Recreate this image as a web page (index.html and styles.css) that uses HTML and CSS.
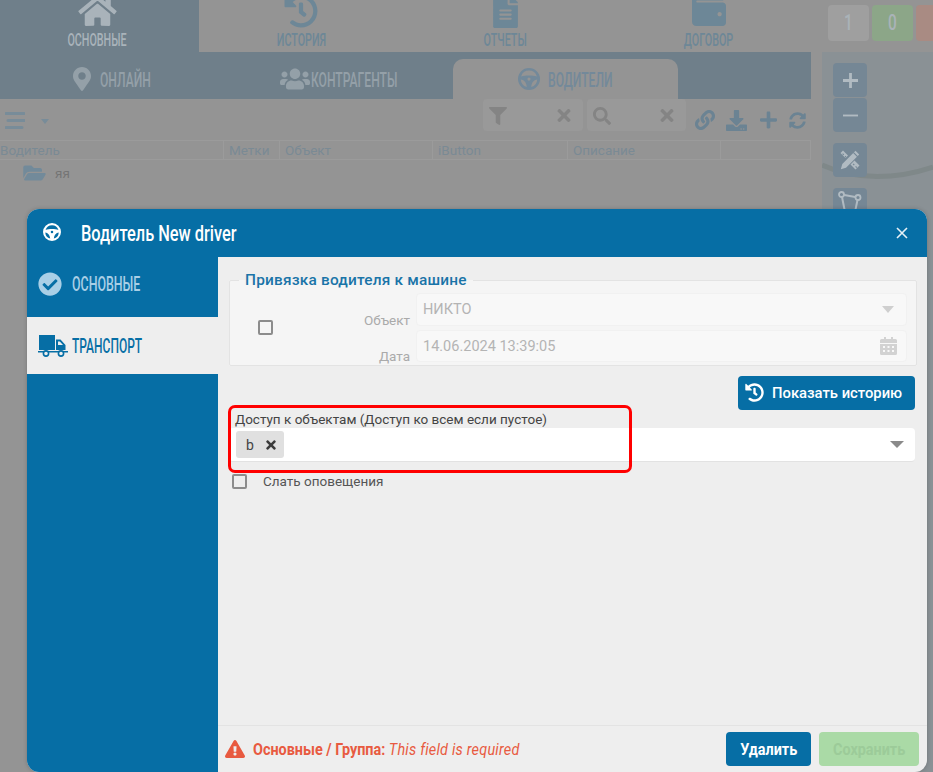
FILE: index.html
```html
<!DOCTYPE html>
<html lang="ru">
<head>
<meta charset="utf-8">
<title>Водитель New driver</title>
<link rel="stylesheet" href="styles.css">
</head>
<body>
<svg class="defs" width="0" height="0" aria-hidden="true">
  <symbol id="i-wheel" viewBox="0 0 24 24"><path fill="currentColor" fill-rule="evenodd" d="M12 0a12 12 0 1 0 0 24a12 12 0 1 0 0-24zM3.4 9.2A9 9 0 0 1 20.6 9.2C16 7.8 8 7.8 3.4 9.2zM3 12.6C6.4 12.8 9 15.6 9.6 20.7A9 9 0 0 1 3 12.6zM21 12.6C17.6 12.8 15 15.6 14.4 20.7A9 9 0 0 0 21 12.6zM12 10.4a1.7 1.7 0 1 0 0 3.4a1.7 1.7 0 1 0 0-3.4z"/></symbol>
  <symbol id="i-times" viewBox="0 0 352 512"><path fill="currentColor" d="M242.72 256l100.07-100.07c12.28-12.28 12.28-32.19 0-44.48l-22.24-22.24c-12.28-12.28-32.19-12.28-44.48 0L176 189.28 75.93 89.21c-12.28-12.28-32.19-12.28-44.48 0L9.21 111.45c-12.28 12.28-12.28 32.19 0 44.48L109.28 256 9.21 356.07c-12.28 12.28-12.28 32.19 0 44.48l22.24 22.24c12.28 12.28 32.2 12.28 44.48 0L176 322.72l100.07 100.07c12.28 12.28 32.2 12.28 44.48 0l22.24-22.24c12.28-12.28 12.28-32.19 0-44.48L242.72 256z"/></symbol>
  <symbol id="i-history" viewBox="0 0 512 512"><path fill="currentColor" d="M504 255.531c.253 136.64-111.18 248.372-247.82 248.468-59.015.042-113.223-20.53-155.822-54.911-11.077-8.94-11.905-25.541-1.839-35.607l11.267-11.267c8.609-8.609 22.353-9.551 31.891-1.984C173.062 425.135 212.781 440 256 440c101.705 0 184-82.311 184-184 0-101.705-82.311-184-184-184-48.814 0-93.149 18.969-126.068 49.932l50.754 50.754c10.08 10.08 2.941 27.314-11.313 27.314H24c-8.837 0-16-7.163-16-16V38.627c0-14.254 17.234-21.393 27.314-11.314l49.372 49.372C129.209 31.084 189.552 8 256 8c136.81 0 247.747 110.78 248 247.531zm-180.912 78.784l9.823-12.63c8.138-10.463 6.253-25.542-4.21-33.679L288 256.349V152c0-13.255-10.745-24-24-24h-16c-13.255 0-24 10.745-24 24v135.651l65.409 50.874c10.463 8.137 25.541 6.253 33.679-4.21z"/></symbol>
</svg>

<div class="app">
  <main class="main">
    <nav class="nav">
      <a class="nav-item nav-active">
        <svg class="ico-home" viewBox="0 0 576 512"><path fill="currentColor" d="M280.37 148.26L96 300.11V464a16 16 0 0 0 16 16l112.06-.29a16 16 0 0 0 15.92-16V368a16 16 0 0 1 16-16h64a16 16 0 0 1 16 16v95.64a16 16 0 0 0 16 16.05L464 480a16 16 0 0 0 16-16V300L295.67 148.26a12.19 12.19 0 0 0-15.3 0zM571.6 251.47L488 182.56V44.05a12 12 0 0 0-12-12h-56a12 12 0 0 0-12 12v72.61L318.47 43a48 48 0 0 0-61 0L4.34 251.47a12 12 0 0 0-1.6 16.9l25.5 31A12 12 0 0 0 45.15 301l235.22-193.74a12.19 12.19 0 0 1 15.3 0L530.9 301a12 12 0 0 0 16.9-1.6l25.5-31a12 12 0 0 0-1.7-16.93z"/></svg>
        <span class="cond nav-label">ОСНОВНЫЕ</span>
      </a>
      <a class="nav-item">
        <svg class="ico-hist"><use href="#i-history"/></svg>
        <span class="cond nav-label">ИСТОРИЯ</span>
      </a>
      <a class="nav-item">
        <svg class="ico-file" viewBox="0 0 384 512"><path fill="currentColor" d="M224 136V0H24C10.7 0 0 10.7 0 24v464c0 13.3 10.7 24 24 24h336c13.3 0 24-10.7 24-24V160H248c-13.2 0-24-10.8-24-24zm64 236c0 6.6-5.4 12-12 12H108c-6.6 0-12-5.4-12-12v-8c0-6.6 5.4-12 12-12h168c6.6 0 12 5.4 12 12v8zm0-64c0 6.6-5.4 12-12 12H108c-6.6 0-12-5.4-12-12v-8c0-6.6 5.4-12 12-12h168c6.6 0 12 5.4 12 12v8zm0-72v8c0 6.6-5.4 12-12 12H108c-6.6 0-12-5.4-12-12v-8c0-6.6 5.4-12 12-12h168c6.6 0 12 5.4 12 12zm96-114.1v6.1H256V0h6.1c6.4 0 12.5 2.5 17 7l97.9 98c4.5 4.5 7 10.6 7 16.9z"/></svg>
        <span class="cond nav-label">ОТЧЕТЫ</span>
      </a>
      <a class="nav-item">
        <svg class="ico-wallet" viewBox="0 0 512 512"><path fill="currentColor" d="M461.2 128H80c-8.84 0-16-7.16-16-16s7.16-16 16-16h384c8.84 0 16-7.16 16-16 0-26.51-21.49-48-48-48H64C28.65 32 0 60.65 0 96v320c0 35.35 28.65 64 64 64h397.2c28.02 0 50.8-21.53 50.8-48V176c0-26.47-22.78-48-50.8-48zM416 336c-17.67 0-32-14.33-32-32s14.33-32 32-32 32 14.33 32 32-14.33 32-32 32z"/></svg>
        <span class="cond nav-label">ДОГОВОР</span>
      </a>
    </nav>

    <div class="tabs">
      <a class="tab tab-online">
        <svg class="ico-pin" viewBox="0 0 384 512"><path fill="currentColor" d="M172.268 501.67C26.97 291.031 0 269.413 0 192 0 85.961 85.961 0 192 0s192 85.961 192 192c0 77.413-26.97 99.031-172.268 309.67-9.535 13.774-29.93 13.773-39.464 0zM192 272c44.183 0 80-35.817 80-80s-35.817-80-80-80-80 35.817-80 80 35.817 80 80 80z"/></svg>
        <span class="cond tab-label">ОНЛАЙН</span>
      </a>
      <a class="tab tab-partners">
        <svg class="ico-users" viewBox="0 0 640 512"><path fill="currentColor" d="M96 224c35.3 0 64-28.7 64-64s-28.7-64-64-64-64 28.7-64 64 28.7 64 64 64zm448 0c35.3 0 64-28.7 64-64s-28.7-64-64-64-64 28.7-64 64 28.7 64 64 64zm32 32h-64c-17.6 0-33.5 7.1-45.1 18.6 40.3 22.1 68.9 62 75.1 109.4h66c17.7 0 32-14.3 32-32v-32c0-35.3-28.7-64-64-64zm-256 0c61.9 0 112-50.1 112-112S381.9 32 320 32 208 82.1 208 144s50.1 112 112 112zm76.8 32h-8.3c-20.8 10-43.9 16-68.5 16s-47.6-6-68.5-16h-8.3C179.6 288 128 339.6 128 403.2V432c0 26.5 21.5 48 48 48h288c26.5 0 48-21.5 48-48v-28.8c0-63.6-51.6-115.2-115.2-115.2zm-223.7-13.4C161.5 263.1 145.6 256 128 256H64c-35.3 0-64 28.7-64 64v32c0 17.7 14.3 32 32 32h65.9c6.3-47.4 34.9-87.3 75.2-109.4z"/></svg>
        <span class="cond tab-label">КОНТРАГЕНТЫ</span>
      </a>
      <a class="tab tab-drivers">
        <svg class="ico-wheel-tab"><use href="#i-wheel"/></svg>
        <span class="cond tab-label">ВОДИТЕЛИ</span>
      </a>
    </div>

    <div class="toolbar">
      <svg class="ico-bars" viewBox="0 0 20 17"><path fill="currentColor" d="M1 0h18a1 1 0 0 1 0 3H1a1 1 0 0 1 0-3zM3 7h17a1 1 0 0 1 0 3H3a1 1 0 0 1 0-3zM1 14h16a1 1 0 0 1 0 3H1a1 1 0 0 1 0-3z"/></svg>
      <span class="caret-small"></span>
      <div class="tool-spacer"></div>
      <div class="tool-box tool-filter">
        <svg class="ico-filter" viewBox="0 0 512 512"><path fill="currentColor" d="M487.976 0H24.028C2.71 0-8.047 25.866 7.058 40.971L192 225.941V432c0 7.831 3.821 15.17 10.237 19.662l80 55.98C298.02 518.69 320 507.493 320 487.98V225.941l184.947-184.97C520.021 25.896 509.338 0 487.976 0z"/></svg>
        <svg class="ico-clear"><use href="#i-times"/></svg>
      </div>
      <div class="tool-box tool-search">
        <svg class="ico-search" viewBox="0 0 512 512"><path fill="currentColor" d="M505 442.7L405.3 343c-4.5-4.5-10.6-7-17-7H372c27.6-35.3 44-79.7 44-128C416 93.1 322.9 0 208 0S0 93.1 0 208s93.1 208 208 208c48.3 0 92.7-16.4 128-44v16.3c0 6.4 2.5 12.5 7 17l99.7 99.7c9.4 9.4 24.6 9.4 33.9 0l28.3-28.3c9.4-9.4 9.4-24.6.1-34zM208 336c-70.7 0-128-57.2-128-128 0-70.7 57.2-128 128-128 70.7 0 128 57.2 128 128 0 70.7-57.2 128-128 128z"/></svg>
        <svg class="ico-clear"><use href="#i-times"/></svg>
      </div>
      <div class="tool-icons">
        <svg class="ico-link" viewBox="0 0 512 512"><path fill="currentColor" d="M326.612 185.391c59.747 59.809 58.927 155.698.36 214.59-.11.12-.24.25-.36.37l-67.2 67.2c-59.27 59.27-155.699 59.262-214.96 0-59.27-59.26-59.27-155.7 0-214.96l37.106-37.106c9.84-9.84 26.786-3.3 27.294 10.606.648 17.722 3.826 35.527 9.69 52.721 1.986 5.822.567 12.262-3.783 16.612l-13.087 13.087c-28.026 28.026-28.905 73.66-1.155 101.96 28.024 28.579 74.086 28.749 102.325.51l67.2-67.19c28.191-28.191 28.073-73.757 0-101.83-3.701-3.694-7.429-6.564-10.341-8.569a16.037 16.037 0 0 1-6.947-12.606c-.396-10.567 3.348-21.456 11.698-29.806l21.054-21.055c5.521-5.521 14.182-6.199 20.584-1.731a152.482 152.482 0 0 1 20.522 17.197zM467.547 44.449c-59.261-59.262-155.69-59.27-214.96 0l-67.2 67.2c-.12.12-.25.25-.36.37-58.566 58.892-59.387 154.781.36 214.59a152.454 152.454 0 0 0 20.521 17.196c6.402 4.468 15.064 3.789 20.584-1.731l21.054-21.055c8.35-8.35 12.094-19.239 11.698-29.806a16.037 16.037 0 0 0-6.947-12.606c-2.912-2.005-6.64-4.875-10.341-8.569-28.073-28.073-28.191-73.639 0-101.83l67.2-67.19c28.239-28.239 74.3-28.069 102.325.51 27.75 28.3 26.872 73.934-1.155 101.96l-13.087 13.087c-4.35 4.35-5.769 10.79-3.783 16.612 5.864 17.194 9.042 34.999 9.69 52.721.509 13.906 17.454 20.446 27.294 10.606l37.106-37.106c59.271-59.259 59.271-155.699.001-214.959z"/></svg>
        <svg class="ico-download" viewBox="0 0 512 512"><path fill="currentColor" d="M216 0h80c13.3 0 24 10.7 24 24v168h87.7c17.8 0 26.7 21.5 14.1 34.1L269.7 378.3c-7.5 7.5-19.8 7.5-27.3 0L90.1 226.1c-12.6-12.6-3.7-34.1 14.1-34.1H192V24c0-13.3 10.7-24 24-24zm296 376v112c0 13.3-10.7 24-24 24H24c-13.3 0-24-10.7-24-24V376c0-13.3 10.7-24 24-24h146.7l49 49c20.1 20.1 52.5 20.1 72.6 0l49-49H488c13.3 0 24 10.7 24 24zm-124 88c0-11-9-20-20-20s-20 9-20 20 9 20 20 20 20-9 20-20zm64 0c0-11-9-20-20-20s-20 9-20 20 9 20 20 20 20-9 20-20z"/></svg>
        <svg class="ico-plus" viewBox="0 0 448 512"><path fill="currentColor" d="M416 208H272V64c0-17.67-14.33-32-32-32h-32c-17.67 0-32 14.33-32 32v144H32c-17.67 0-32 14.33-32 32v32c0 17.67 14.33 32 32 32h144v144c0 17.67 14.33 32 32 32h32c17.67 0 32-14.33 32-32V304h144c17.67 0 32-14.33 32-32v-32c0-17.67-14.33-32-32-32z"/></svg>
        <svg class="ico-sync" viewBox="0 0 512 512"><path fill="currentColor" d="M370.72 133.28C339.458 104.008 298.888 87.962 255.848 88c-77.458.068-144.328 53.178-162.791 126.85-1.344 5.363-6.122 9.15-11.651 9.15H24.103c-7.498 0-13.194-6.807-11.807-14.176C33.933 94.924 134.813 8 256 8c66.448 0 126.791 26.136 171.315 68.685L463.03 40.97C478.149 25.851 504 36.559 504 57.941V192c0 13.255-10.745 24-24 24H345.941c-21.382 0-32.09-25.851-16.971-40.971l41.75-41.749zM32 296h134.059c21.382 0 32.09 25.851 16.971 40.971l-41.75 41.75c31.262 29.273 71.835 45.319 114.876 45.28 77.418-.07 144.315-53.144 162.787-126.849 1.344-5.363 6.122-9.15 11.651-9.15h57.304c7.498 0 13.194 6.807 11.807 14.176C478.067 417.076 377.187 504 256 504c-66.448 0-126.791-26.136-171.315-68.685L48.97 471.03C33.851 486.149 8 475.441 8 454.059V320c0-13.255 10.745-24 24-24z"/></svg>
      </div>
    </div>

    <div class="thead">
      <div class="th th-driver">Водитель</div>
      <div class="th th-tags">Метки</div>
      <div class="th th-object">Объект</div>
      <div class="th th-ibutton">iButton</div>
      <div class="th th-desc">Описание</div>
      <div class="th th-rest"></div>
    </div>
    <div class="tree-row">
      <svg class="ico-folder" viewBox="0 0 576 512"><path fill="currentColor" d="M572.694 292.093L500.27 416.248A63.997 63.997 0 0 1 444.989 448H45.025c-18.523 0-30.064-20.093-20.731-36.093l72.424-124.155A64 64 0 0 1 152 256h399.964c18.523 0 30.064 20.093 20.73 36.093zM152 224h328v-48c0-26.51-21.49-48-48-48H272l-64-64H48C21.49 64 0 85.49 0 112v278.046l69.077-118.418C86.214 242.25 117.989 224 152 224z"/></svg>
      <span>яя</span>
    </div>
  </main>

  <aside class="side">
    <div class="badges">
      <div class="badge badge-gray"><span class="badge-num">1</span></div>
      <div class="badge badge-green"><span class="badge-num">0</span></div>
      <div class="badge badge-red"></div>
    </div>
    <div class="map">
      <svg class="map-road" viewBox="0 0 111 40" preserveAspectRatio="none"><path d="M0 10C35 26 75 24 111 12" fill="none" stroke="#7f8889" stroke-width="5"/></svg>
      <div class="map-btn map-btn-top"><svg class="ico-zoom" viewBox="0 0 16 16"><path fill="currentColor" d="M6.5 0h3v6.5H16v3H9.5V16h-3V9.5H0v-3h6.5z"/></svg></div>
      <div class="map-btn map-btn-bottom"><svg class="ico-zoom" viewBox="0 0 16 16"><path fill="currentColor" d="M0 7h16v2H0z"/></svg></div>
      <div class="map-btn map-btn-gap">
        <svg class="ico-edit" viewBox="0 0 20 20"><path fill="currentColor" fill-rule="evenodd" d="M15.5.8l3.7 3.700L6 17.700.8 19.200 2.300 14zM13.200 3.100l3.700 3.700.8-.8-3.700-3.700zM3 .5L8 5.500 5.500 8 .5 3zM3 3.300l-.8.8 1.200 1.200.8-.8zM5.500 5.800l-.8.8.8.8.8-.8zM14.500 10.500l5 5-4 4-5-5zM13.500 13.500l-.8.8 1.200 1.200.8-.8zM16 16l-.8.8 1.200 1.200.8-.8z"/></svg>
      </div>
      <div class="map-btn map-btn-gap"><svg class="ico-poly" viewBox="0 0 24 24"><path fill="none" stroke="currentColor" stroke-width="2" d="M3.500 3.500L20 6.500M3.500 3.500L7 21M20 6.500L17 21H7"/><g fill="#758795" stroke="currentColor" stroke-width="1.800"><circle cx="3.500" cy="3.500" r="2.500"/><circle cx="20" cy="6.500" r="2.500"/></g></svg></div>
    </div>
  </aside>

  <section class="modal">
    <header class="modal-head">
      <svg class="ico-wheel-head"><use href="#i-wheel"/></svg>
      <h1 class="cond modal-title">Водитель New driver</h1>
      <svg class="ico-close" viewBox="0 0 12 12"><path fill="none" stroke="currentColor" stroke-width="1.600" d="M1 1l10 10M11 1L1 11"/></svg>
    </header>
    <div class="modal-body">
      <div class="menu">
        <a class="menu-item">
          <svg class="ico-check" viewBox="0 0 512 512"><path fill="currentColor" d="M504 256c0 136.967-111.033 248-248 248S8 392.967 8 256 119.033 8 256 8s248 111.033 248 248zM227.314 387.314l184-184c6.248-6.248 6.248-16.379 0-22.627l-22.627-22.627c-6.248-6.249-16.379-6.249-22.628 0L216 308.118l-70.059-70.059c-6.248-6.248-16.379-6.248-22.628 0l-22.627 22.627c-6.248 6.248-6.248 16.379 0 22.627l104 104c6.249 6.249 16.379 6.249 22.628.001z"/></svg>
          <span class="cond menu-label">ОСНОВНЫЕ</span>
        </a>
        <a class="menu-item menu-active">
          <svg class="ico-truck" viewBox="0 0 30 22"><path fill="currentColor" fill-rule="evenodd" d="M1 0h16v15H1zM18 4.500h4.500L27.500 10v5H18zM20 6.500V10h5l-3.200-3.500z"/><path fill="currentColor" d="M0 16h30v1.500H0z"/><g fill="#eeeeee" stroke="currentColor" stroke-width="1.600"><circle cx="8" cy="18.500" r="2.600"/><circle cx="23" cy="18.500" r="2.600"/></g></svg>
          <span class="cond menu-label">ТРАНСПОРТ</span>
        </a>
      </div>
      <div class="content">
        <fieldset class="bind">
          <legend class="bind-legend">Привязка водителя к машине</legend>
          <div class="bind-grid">
            <span class="checkbox bind-check"></span>
            <span class="bind-label">Объект</span>
            <div class="bind-input"><span>НИКТО</span><span class="caret caret-light"></span></div>
            <span class="bind-label">Дата</span>
            <div class="bind-input"><span>14.06.2024 13:39:05</span>
              <svg class="ico-cal" viewBox="0 0 17 18"><path fill="currentColor" fill-rule="evenodd" d="M4 0h2v2h5V0h2v2h2.500A1.500 1.500 0 0 1 17 3.500V6H0V3.500A1.500 1.500 0 0 1 1.500 2H4zM0 7h17v9.500a1.500 1.500 0 0 1-1.500 1.500h-14A1.500 1.500 0 0 1 0 16.500zM3 9v2h2V9zM7.500 9v2h2V9zM12 9v2h2V9zM3 13v2h2v-2zM7.500 13v2h2v-2zM12 13v2h2v-2z"/></svg>
            </div>
          </div>
        </fieldset>

        <button class="btn btn-history" type="button">
          <svg class="ico-btn-hist"><use href="#i-history"/></svg>
          <span>Показать историю</span>
        </button>

        <label class="field-label">Доступ к объектам (Доступ ко всем если пустое)</label>
        <div class="select">
          <span class="chip"><span>b</span><svg class="ico-chip"><use href="#i-times"/></svg></span>
          <span class="caret caret-dark"></span>
        </div>

        <div class="notify">
          <span class="checkbox"></span>
          <span>Слать оповещения</span>
        </div>

        <div class="highlight"></div>

        <footer class="modal-foot">
          <svg class="ico-warn" viewBox="0 0 576 512"><path fill="currentColor" d="M569.517 440.013C587.975 472.007 564.806 512 527.94 512H48.054c-36.937 0-59.999-40.055-41.577-71.987L246.423 23.985c18.467-32.009 64.72-31.951 83.154 0l239.94 416.028zM288 354c-25.405 0-46 20.595-46 46s20.595 46 46 46 46-20.595 46-46-20.595-46-46-46zm-43.673-165.346l7.418 136c.347 6.364 5.609 11.346 11.982 11.346h48.546c6.373 0 11.635-4.982 11.982-11.346l7.418-136c.375-6.874-5.098-12.654-11.982-12.654h-63.383c-6.884 0-12.356 5.78-11.981 12.654z"/></svg>
          <div class="foot-wrap"><span class="foot-msg"><b>Основные / Группа:</b> <i>This field is required</i></span></div>
          <button class="btn btn-del" type="button"><span class="btn-cond">Удалить</span></button>
          <button class="btn btn-save" type="button"><span class="btn-cond">Сохранить</span></button>
        </footer>
      </div>
    </div>
  </section>
</div>
</body>
</html>
```

FILE: styles.css
```css
* { box-sizing: border-box; }
html, body { margin: 0; height: 100%; }
body {
  background: #949494;
  font-family: Roboto, "Liberation Sans", sans-serif;
  font-size: 13.5px;
  overflow: hidden;
}
.defs { position: absolute; }
svg { display: block; flex: none; }
a { display: flex; }

.app { display: flex; width: 933px; height: 772px; overflow: hidden; position: relative; }
.main { width: 811px; flex: none; }

.cond {
  display: inline-block;
  font-family: Roboto, sans-serif;
  font-weight: 500;
  white-space: nowrap;
}

/* top navigation */
.nav { display: flex; height: 52px; margin-left: -5px; overflow: hidden; }
.nav-item {
  width: 204px; flex-direction: column; align-items: center; justify-content: flex-end;
  color: #6d8797; padding-bottom: 1px;
}
.nav-active { background: #6f7f8a; color: #a9b3ba; }
.nav-label { font-size: 18.5px; line-height: 21px; transform: scaleX(.58); margin-top: 2px; }
.ico-home { width: 39px; height: 34px; }
.ico-hist { width: 34px; height: 34px; }
.ico-file { width: 25px; height: 33px; }
.ico-wallet { width: 34px; height: 34px; }

/* second-level tabs */
.tabs { display: flex; height: 47px; background: #6f7f8a; padding-top: 7px; }
.tab { width: 226.5px; height: 40px; align-items: center; color: #94a0a8; }
.tab-label { font-size: 20.5px; margin-top: 2px; transform-origin: left center; transform: scaleX(.59); }
.tab-online { padding-left: 73px; gap: 9px; }
.tab-partners { padding-left: 53.5px; gap: 1px; }
.tab-drivers {
  width: 225px; padding-left: 65px; gap: 8px;
  background: #949494; border-radius: 10px 10px 0 0; color: #73899a;
}
.ico-pin { width: 18px; height: 24px; }
.ico-users { width: 30px; height: 24px; }
.ico-wheel-tab { width: 22px; height: 22px; }

/* toolbar */
.toolbar { display: flex; align-items: center; height: 41px; padding-left: 5px; color: #788c99; }
.ico-bars { width: 20px; height: 17px; margin-top: 2px; }
.caret-small {
  width: 0; height: 0; margin: 3px 0 0 16px;
  border: 4px solid transparent; border-top: 5px solid #788c99; border-bottom: 0;
}
.tool-spacer { flex: 1; }
.tool-box {
  display: flex; align-items: center; justify-content: space-between;
  height: 32px; margin-top: -9px; padding: 0 12px 0 6px;
  background: #999999; border-radius: 4px; color: #848484;
}
.tool-filter { width: 100px; margin-right: 4px; }
.tool-search { width: 99px; margin-right: 4px; }
.tool-box svg { margin-top: 1px; }
.ico-filter { width: 18px; height: 18px; }
.ico-search { width: 18px; height: 18px; }
.ico-clear { width: 14px; height: 19px; }
.tool-icons { display: flex; align-items: center; width: 121px; padding-left: 5px; margin-top: 1px; color: #6b8393; }
.ico-link { width: 20px; height: 20px; margin-right: 11px; }
.ico-download { width: 21px; height: 21px; margin-right: 13px; }
.ico-plus { width: 17px; height: 20px; margin-right: 12px; }
.ico-sync { width: 17px; height: 17px; }

/* table */
.thead { display: flex; height: 20px; border: 1px solid #9b9b9b; border-left: 0; }
.th { line-height: 19px; padding-left: 5px; border-right: 1px solid #9b9b9b; color: #7a8a94; }
.th-driver { width: 224px; padding-left: 0; }
.th-tags { width: 56px; }
.th-object { width: 153px; }
.th-ibutton { width: 135px; }
.th-desc { width: 153px; }
.th-rest { flex: 1; border-right: 0; }
.tree-row { display: flex; align-items: center; gap: 9px; height: 24px; padding: 1px 0 0 23px; color: #747474; }
.ico-folder { width: 23px; height: 20px; color: #728a9a; }

/* right column */
.side { width: 111px; margin-left: 11px; flex: none; }
.badges { display: flex; gap: 3px; height: 52px; padding: 5px 0 0 6px; }
.badge {
  width: 41px; height: 36px; flex: none; border-radius: 4px;
  font-size: 22px; line-height: 36px; text-align: center; color: #aab3b8;
}
.badge-num { display: inline-block; font-weight: 500; transform: scaleX(.7); }
.badge-gray { background: #9f9f9f; }
.badge-green { background: #8ca688; }
.badge-red { background: #a98b83; }
.map { position: relative; height: 720px; padding: 11px 0 0 11px; background: #8a9195; }
.map-road { position: absolute; left: 0; top: 103px; width: 111px; height: 40px; }
.map-btn {
  position: relative; display: flex; align-items: center; justify-content: center;
  width: 34px; height: 34px; background: #758795; color: #b1bbc2; border-radius: 4px;
}
.map-btn-top { margin-bottom: 1px; }
.map-btn-gap { margin-top: 11px; }
.ico-zoom { width: 15px; height: 15px; }
.ico-edit { width: 20px; height: 20px; }
.ico-poly { width: 24px; height: 24px; margin-top: -5px; }

/* modal */
.modal {
  position: absolute; left: 27px; top: 209px; width: 900px; height: 563px;
  display: flex; flex-direction: column;
  background: #eeeeee; border-radius: 12px; overflow: hidden;
  box-shadow: 0 0 4px rgba(0,0,0,.2);
}
.modal-head {
  display: flex; align-items: center; flex: none; height: 48px;
  padding: 0 19px 0 16px; background: #066ea5; color: #fff;
}
.ico-wheel-head { width: 18px; height: 18px; margin-top: -2px; }
.modal-title {
  margin: 2px 0 0 20px; font-size: 22px; line-height: 48px; font-weight: 500;
  transform-origin: left center; transform: scaleX(.744); flex: 1;
}
.ico-close { width: 12px; height: 12px; color: #e6f1f7; }
.modal-body { display: flex; flex: 1; min-height: 0; }
.menu { width: 191px; flex: none; background: #066ea5; }
.menu-item { height: 60px; align-items: center; padding: 0 0 6px 11px; color: #a9cfe6; gap: 10px; }
.menu-active { height: 57px; padding-bottom: 0; background: #eeeeee; color: #066ea5; gap: 4px; }
.menu-label { font-size: 20px; transform-origin: left center; transform: scaleX(.62); }
.menu-active .menu-label { transform: scaleX(.6); }
.ico-check { width: 24px; height: 24px; }
.ico-truck { width: 30px; height: 22px; }

.content {
  position: relative; display: flex; flex-direction: column; flex: 1; min-width: 0;
  padding: 14px 12px 0 11px;
}
.bind {
  margin: 0 -2px 0 0; padding: 0; min-width: 0; height: 95px;
  background: #f5f5f5; border: 1px solid #e3e3e3; border-radius: 2px;
}
.bind-legend {
  margin-left: 9px; padding: 0 6px; font-size: 15.4px; font-weight: 500; line-height: 18px;
  color: #1a74a8; letter-spacing: .2px;
}
.bind-grid {
  display: grid; grid-template-columns: 48px 138px 491px; row-gap: 4px;
  padding-top: 4px;
}
.bind-check { grid-row: 1 / 3; align-self: center; justify-self: start; margin-left: 28px; }
.bind-label { grid-column: 2; text-align: right; align-self: end; color: #aaaaaa; line-height: 14px; margin: 0 6px -1px 0; }
.bind-input {
  grid-column: 3; display: flex; align-items: center; justify-content: space-between;
  height: 33px; padding: 0 9px 0 6px;
  background: #f8f8f8; border: 1px solid #f1f1f1; border-radius: 4px;
  font-size: 14.5px; color: #b4b4b4;
}
.bind-input + .bind-label + .bind-input { height: 32px; }
.ico-cal { width: 17px; height: 18px; color: #d2d2d2; }
.checkbox {
  display: block; flex: none; width: 15px; height: 15px;
  border: 2px solid #8c8c8c; border-radius: 2px; background: #f5f5f5;
}
.caret { width: 0; height: 0; border-style: solid; border-color: transparent; border-bottom-width: 0; }
.caret-light { border-width: 7px 6px 0; border-top-color: #cfcfcf; margin-right: 3px; }
.caret-dark { border-width: 7px 7px 0; border-top-color: #8a8a8a; margin-right: 5px; }

.btn {
  display: flex; align-items: center; justify-content: center;
  border: 0; border-radius: 4px; font-family: Roboto, sans-serif; color: #fff; padding: 0;
}
.btn-history {
  align-self: flex-end; width: 177px; height: 34px; margin-top: 10px; gap: 8px;
  background: #066ea5; font-size: 14.8px; font-weight: 500; justify-content: flex-start; padding: 0 0 1px 7px;
}
.ico-btn-hist { width: 19px; height: 19px; }

.field-label { margin: 1px 0 1px 6px; line-height: 16px; color: #444444; }
.select {
  display: flex; align-items: center; justify-content: space-between;
  height: 34px; padding: 0 6px 0 7px;
  background: #fff; border-bottom: 1px solid #e2e2e2; border-radius: 4px;
}
.chip {
  display: flex; align-items: center; gap: 12px; width: 48px; height: 27px; padding-left: 10px;
  background: #e0e0e0; border-radius: 3px; font-size: 14px; color: #444;
}
.ico-chip { width: 10px; height: 14px; color: #3b3b3b; }
.notify {
  display: flex; align-items: center; gap: 16px; height: 16px; margin: 11px 0 0 3px; color: #555555;
}
.notify .checkbox { background: #eeeeee; }

.highlight {
  position: absolute; left: 10px; top: 148px; width: 404px; height: 68px;
  border: 3px solid #ff0000; border-radius: 7px; pointer-events: none;
}

.modal-foot {
  display: flex; align-items: center; height: 47px; margin: auto -12px 0 -11px;
  padding: 0 8px 0 7px; border-top: 1px solid #e3e3e3; color: #e85a40;
}
.ico-warn { width: 20px; height: 18px; }
.foot-wrap { flex: 1; margin-left: 8px; }
.foot-msg {
  display: inline-block; font-size: 16px; white-space: nowrap;
  transform-origin: left center; transform: scaleX(.9);
}
.foot-msg b { font-weight: 700; }
.foot-msg i { letter-spacing: .25px; }
.btn-del, .btn-save { height: 34px; font-size: 16px; font-weight: 700; }
.btn-del { width: 85px; background: #066ea5; margin-right: 8px; }
.btn-save { width: 100px; background: #aadaa6; color: #9ccb99; }
.btn-cond { display: inline-block; transform: scaleX(.9); }
```
